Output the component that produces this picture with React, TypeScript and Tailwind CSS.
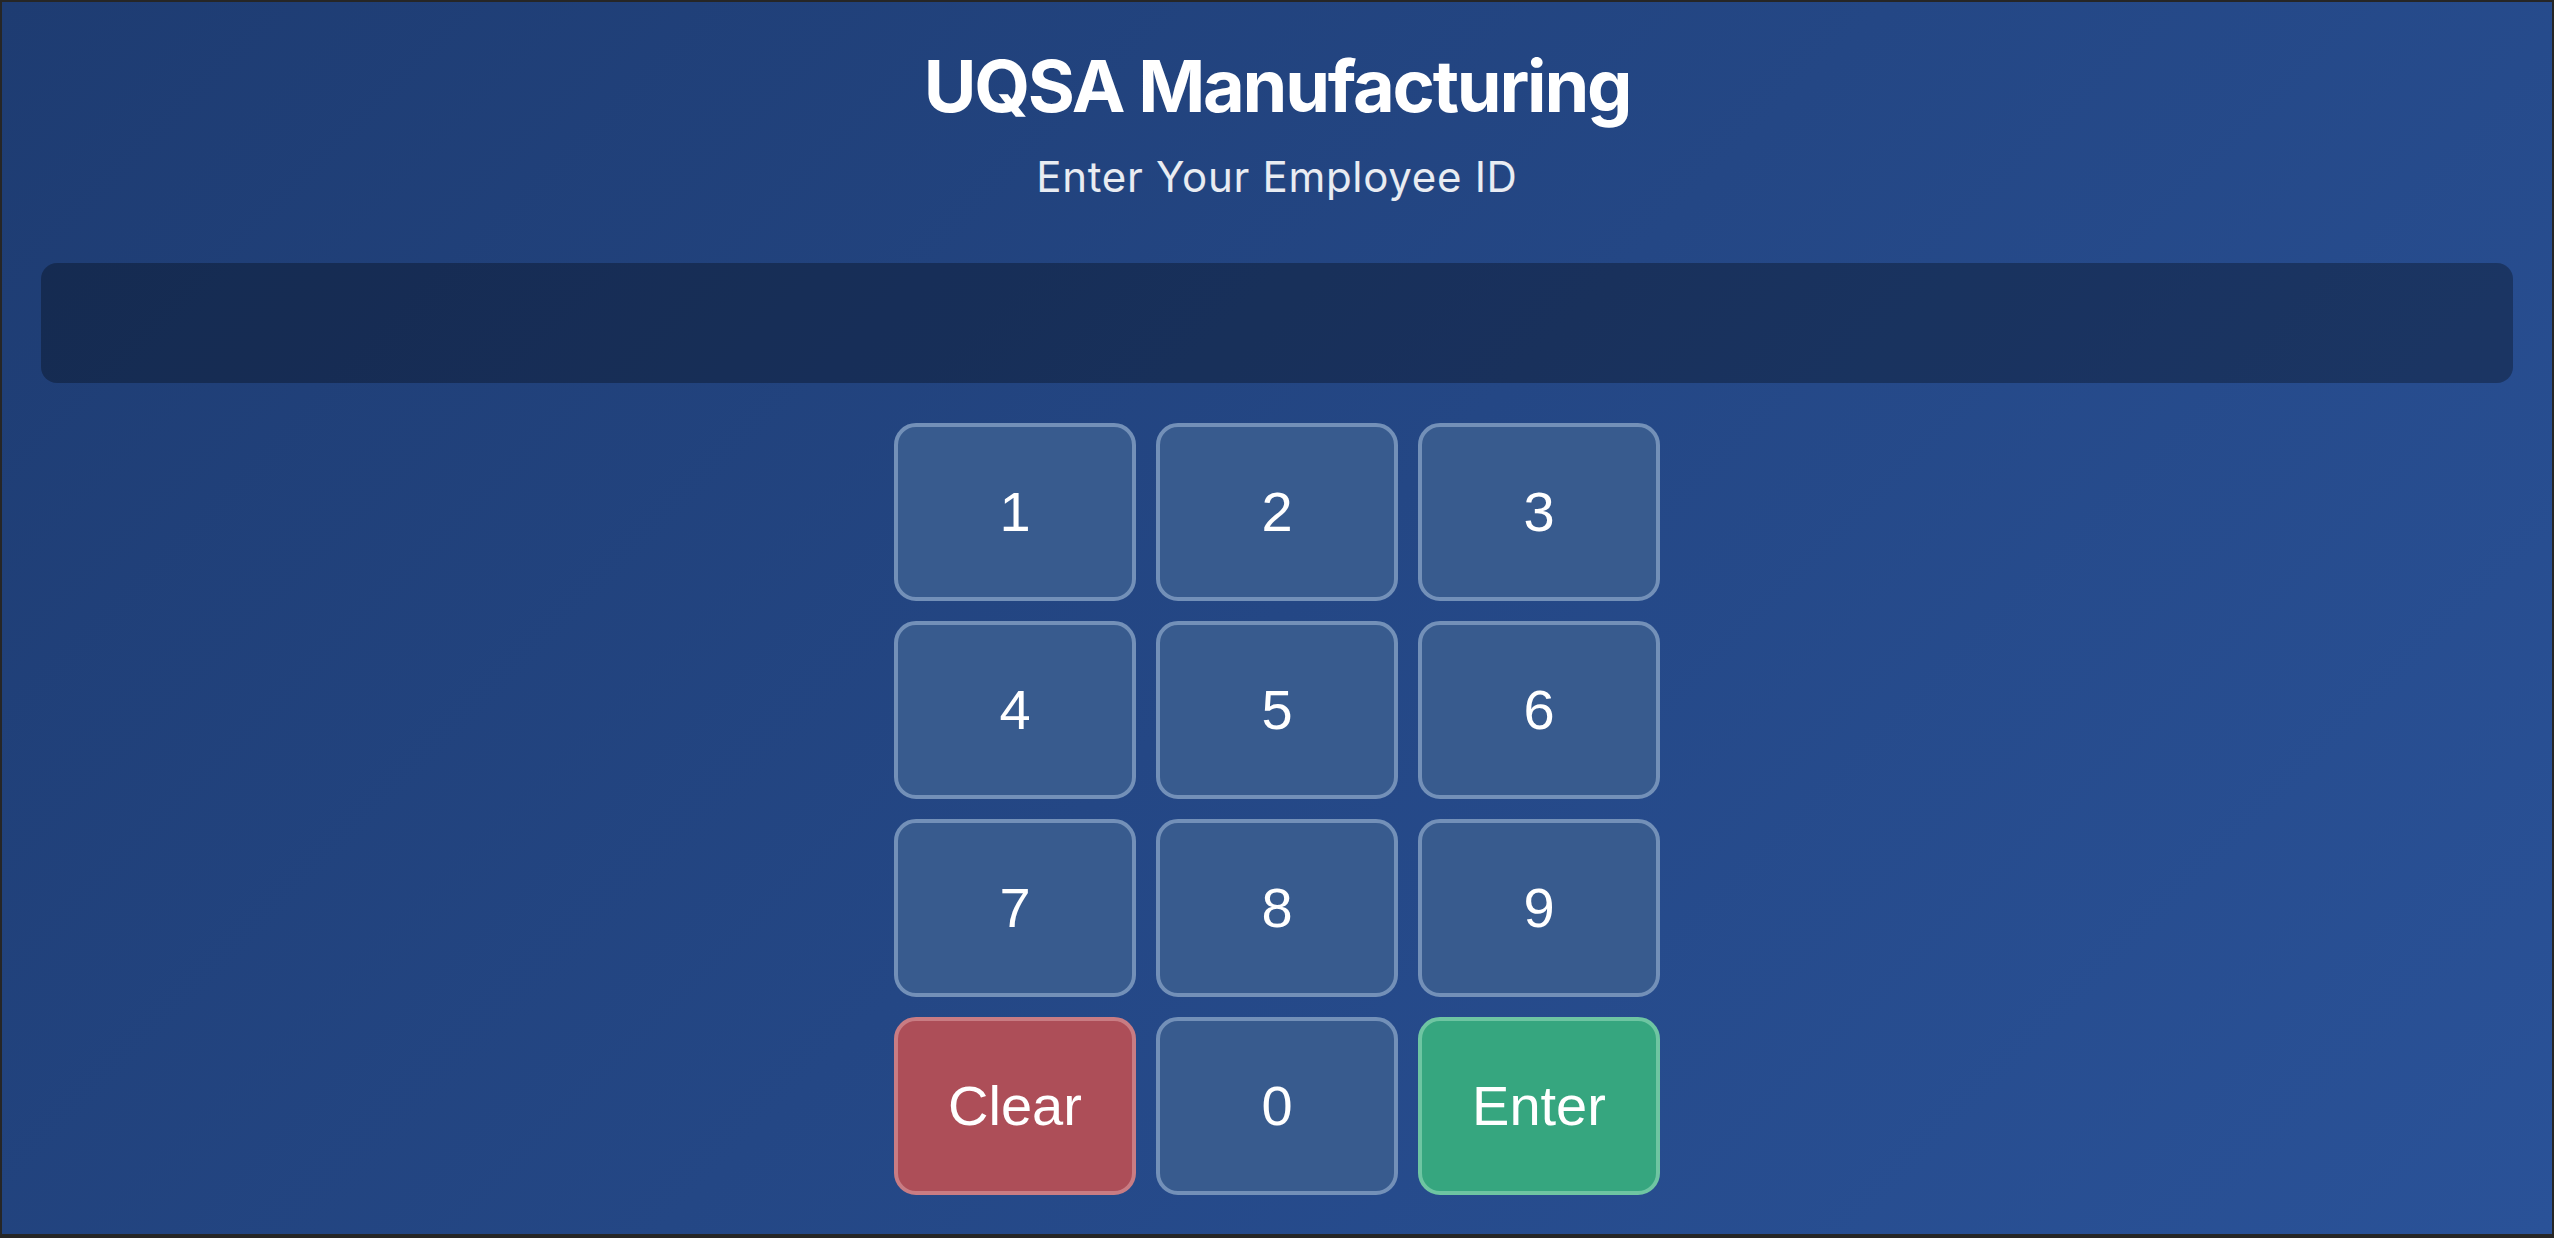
import { useState } from 'react';

const KEYS = ['1', '2', '3', '4', '5', '6', '7', '8', '9'];

function Key({ label, onPress, tone = 'plain' }: { label: string; onPress: () => void; tone?: 'plain' | 'clear' | 'enter' }) {
  const toneClass =
    tone === 'clear'
      ? 'bg-[#ad4e58] border-[#c97c83]'
      : tone === 'enter'
        ? 'bg-[#36a67f] border-[#6ec5a2]'
        : 'bg-[#385b8e] border-[#7390b8]';

  return (
    <button
      onClick={onPress}
      className={`h-[178px] w-[242px] rounded-[22px] border-4 text-[56px] text-white flex items-center justify-center ${toneClass}`}
      style={{ fontFamily: '"Liberation Sans", Arial, sans-serif' }}
    >
      {label}
    </button>
  );
}

export default function App() {
  const [value, setValue] = useState('');

  const press = (d: string) => setValue((v) => (v.length < 12 ? v + d : v));

  return (
    <div className="h-[1238px] w-full border-t-2 border-x-2 border-b-4 border-[#262626] overflow-hidden">
      <div
        className="h-full w-full bg-[linear-gradient(135deg,#1e3c72_0%,#2a5298_100%)] px-[39px] pt-[48px] flex flex-col"
        style={{ fontFamily: 'Inter, "Noto Sans", sans-serif' }}
      >
        <h1 className="text-center text-[72px] leading-[72px] font-bold tracking-[-2.2px] text-white">UQSA Manufacturing</h1>
        <p className="mt-[34px] text-center text-[42px] leading-[42px] tracking-[0.7px] text-white/90">Enter Your Employee ID</p>

        <div className="mt-[65px] h-[120px] rounded-2xl bg-black/30 flex items-center justify-center text-[64px] tracking-[0.3em] text-white">
          {value}
        </div>

        <div className="mt-[40px] mx-auto grid grid-cols-[repeat(3,242px)] gap-5">
          {KEYS.map((k) => (
            <Key key={k} label={k} onPress={() => press(k)} />
          ))}
          <Key label="Clear" tone="clear" onPress={() => setValue('')} />
          <Key label="0" onPress={() => press('0')} />
          <Key label="Enter" tone="enter" onPress={() => {}} />
        </div>
      </div>
    </div>
  );
}
